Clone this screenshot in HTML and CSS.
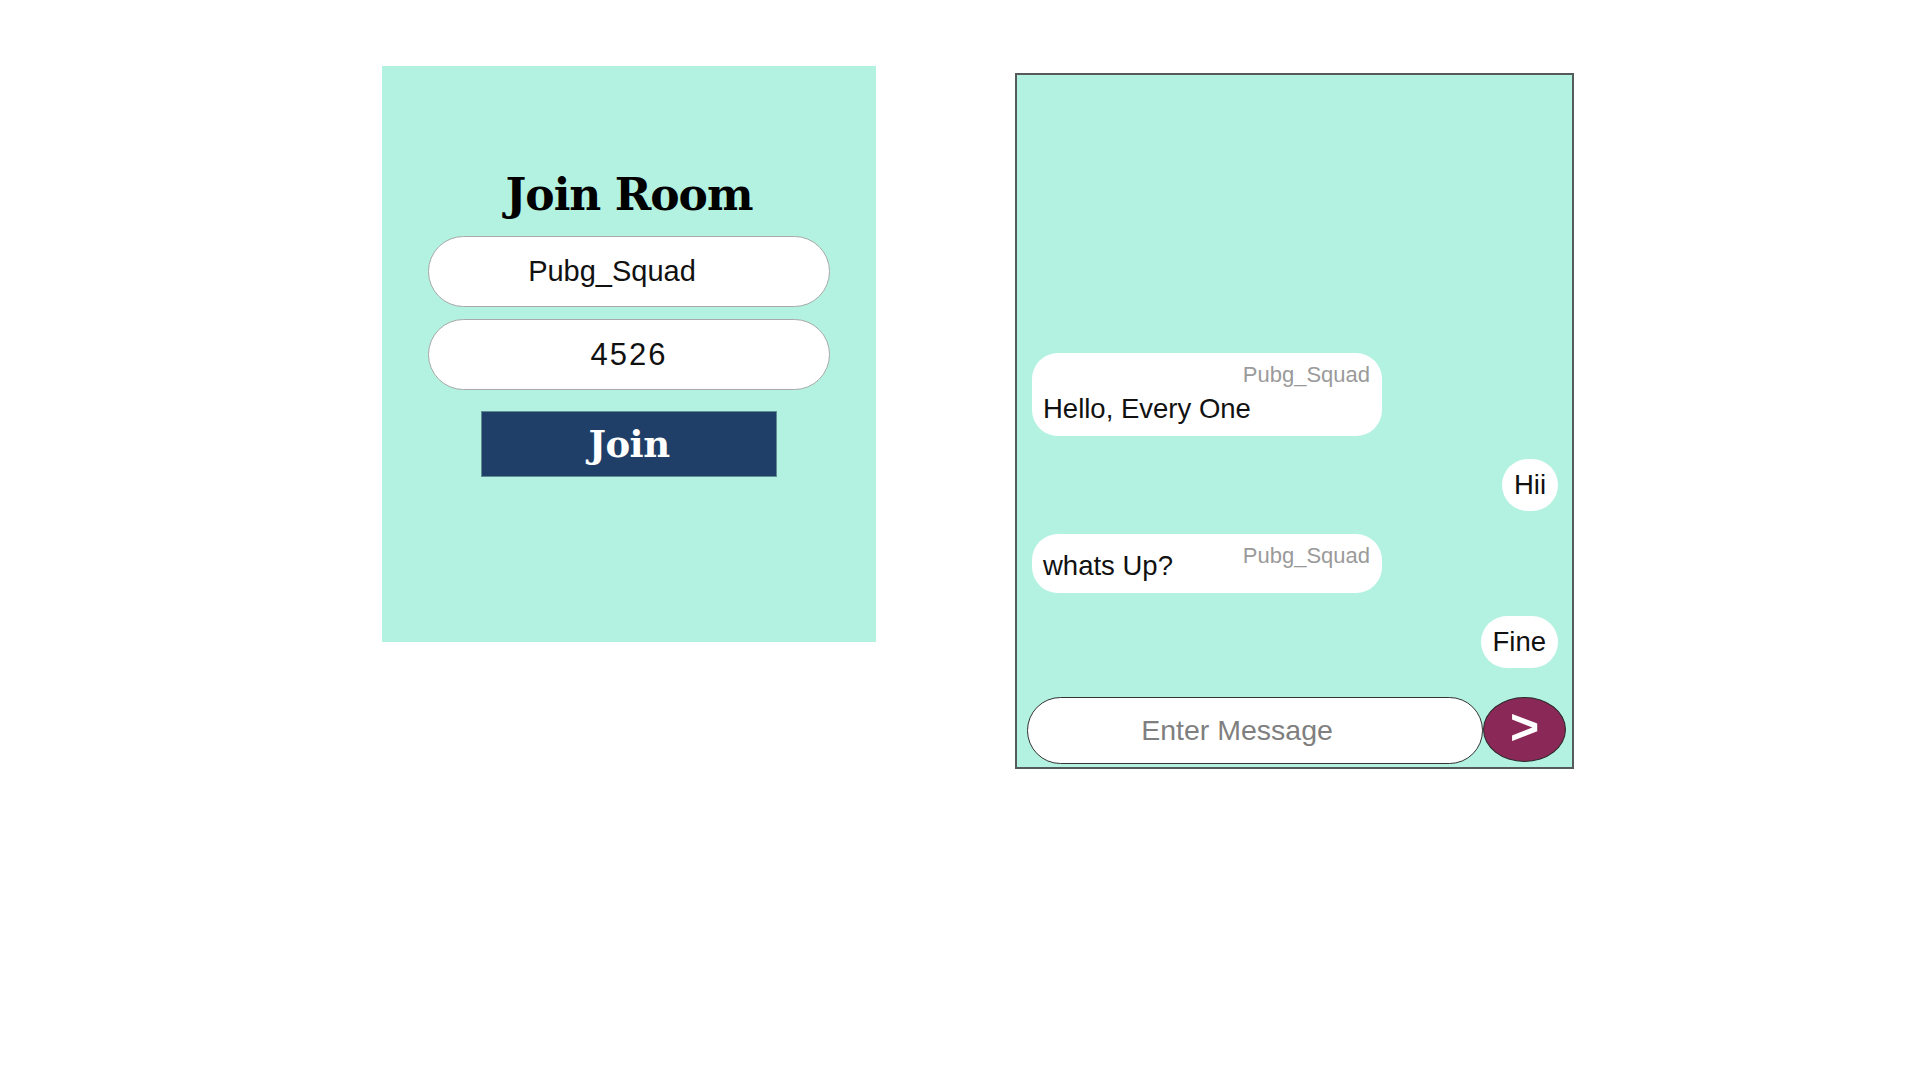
FILE: index.html
```html
<!DOCTYPE html>
<html lang="en">
<head>
<meta charset="utf-8">
<title>Chat Room</title>
<link rel="stylesheet" href="styles.css">
</head>
<body>
<div class="page">
  <section class="join-card">
    <h1 class="join-title">Join Room</h1>
    <input class="join-input join-input-name" type="text" value="Pubg_Squad">
    <input class="join-input join-input-code" type="text" value="4526">
    <button class="join-btn">Join</button>
  </section>

  <section class="chat">
    <div class="messages">
      <div class="msg msg-other">
        <span class="msg-author">Pubg_Squad</span>
        <p class="msg-text">Hello, Every One</p>
      </div>
      <div class="msg msg-self">
        <p class="msg-text">Hii</p>
      </div>
      <div class="msg msg-other">
        <span class="msg-author">Pubg_Squad</span>
        <p class="msg-text">whats Up?</p>
      </div>
      <div class="msg msg-self">
        <p class="msg-text">Fine</p>
      </div>
    </div>
    <div class="composer">
      <input class="composer-input" type="text" placeholder="Enter Message">
      <button class="send-btn">&gt;</button>
    </div>
  </section>
</div>
</body>
</html>
```

FILE: styles.css
```css
* { box-sizing: border-box; }

html, body {
  margin: 0;
  padding: 0;
  background: #ffffff;
}

body {
  font-family: "Liberation Sans", Arial, sans-serif;
  color: #111;
}

.page {
  display: flex;
  align-items: flex-start;
  gap: 139px;
  padding: 66px 0 0 382px;
}

/* ---------- Join card ---------- */
.join-card {
  width: 494px;
  height: 576px;
  background: #b3f2e0;
  display: flex;
  flex-direction: column;
  align-items: center;
  padding-top: 105px;
}

.join-title {
  margin: 0 0 17px;
  font-family: "DejaVu Serif", serif;
  font-weight: 700;
  font-size: 44px;
  line-height: 48px;
  letter-spacing: -1px;
  color: #000;
}

.join-input {
  width: 402px;
  height: 71px;
  margin: 0 0 12px;
  border: 1.5px solid #a9a9a9;
  border-radius: 36px;
  background: #fff;
  font-family: "Liberation Sans", Arial, sans-serif;
  font-size: 29px;
  color: #111;
  text-align: center;
  outline: none;
}

.join-input-name {
  padding: 0 34px 0 0;
}

.join-input-code {
  font-size: 31px;
  letter-spacing: 2px;
}

.join-btn {
  margin-top: 9px;
  width: 296px;
  height: 66px;
  background: #1f3f68;
  border: 1px solid #5f8d93;
  color: #fff;
  font-family: "DejaVu Serif", serif;
  font-weight: 700;
  font-size: 37px;
  letter-spacing: -0.5px;
  padding: 0;
  cursor: pointer;
}

/* ---------- Chat panel ---------- */
.chat {
  margin-top: 7px;
  width: 559px;
  height: 696px;
  background: #b3f2e0;
  border: 2px solid #555b5a;
  display: flex;
  flex-direction: column;
}

.messages {
  flex: 1;
  display: flex;
  flex-direction: column;
  justify-content: flex-end;
  gap: 23px;
  padding: 0 14px 29px 15px;
}

.msg {
  display: flow-root;
  background: #fff;
  border-radius: 26px;
}

.msg-other {
  align-self: flex-start;
  width: 350px;
  padding: 10px 12px 12px 11px;
}

.msg-self {
  align-self: flex-end;
  padding: 10px 12px 11px;
  border-radius: 27px;
}

.msg-author {
  float: right;
  font-size: 22px;
  line-height: 24px;
  color: #9a9a9a;
}

.msg-text {
  margin: 0;
  font-size: 27.5px;
  line-height: 31px;
  color: #111;
  white-space: nowrap;
}

.msg-other .msg-text {
  display: table;
  padding-top: 6px;
}

.composer {
  display: flex;
  align-items: flex-start;
  padding: 0 6px 3px 10px;
}

.composer-input {
  width: 456px;
  height: 67px;
  border: 1.5px solid #333;
  border-radius: 34px;
  background: #fff;
  font-family: "Liberation Sans", Arial, sans-serif;
  font-size: 28.5px;
  text-align: center;
  padding: 0 36px 0 0;
  outline: none;
}

.composer-input::placeholder {
  color: #7f7f7f;
  opacity: 1;
}

.send-btn {
  width: 83px;
  height: 65px;
  border-radius: 50%;
  background: #8a2858;
  border: 1.5px solid #2b2b2b;
  color: #fff;
  font-family: "Liberation Sans", Arial, sans-serif;
  font-weight: 700;
  font-size: 50px;
  line-height: 1;
  padding: 0 0 6px;
  cursor: pointer;
}
```
